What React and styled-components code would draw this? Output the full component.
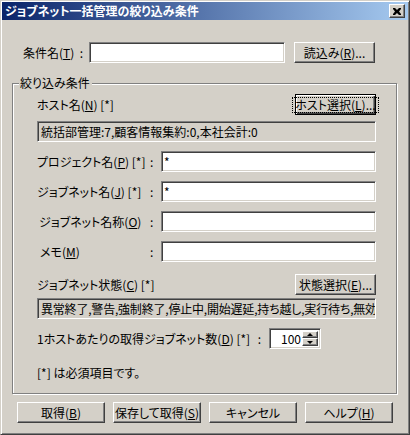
import React from "react";
import styled, { createGlobalStyle, css } from "styled-components";

const GlobalStyle = createGlobalStyle`
  html, body {
    margin: 0;
    padding: 0;
    background: #d4d0c8;
  }
  body {
    font-family: "Noto Sans CJK JP", "Liberation Sans", sans-serif;
    font-size: 12px;
    line-height: 14px;
    color: #000;
    font-feature-settings: "palt";
  }
`;

// classic win 3d edges
const raised = css`
  box-sizing: border-box;
  background: #d4d0c8;
  border: 1px solid;
  border-color: #fff #404040 #404040 #fff;
  box-shadow: inset -1px -1px #808080;
`;

const sunken = css`
  box-sizing: border-box;
  border: 1px solid;
  border-color: #808080 #fff #fff #808080;
  box-shadow: inset 1px 1px #404040, inset -1px -1px #d4d0c8;
`;

const Window = styled.div`
  box-sizing: border-box;
  width: 410px;
  height: 435px;
  background: #d4d0c8;
  border: 1px solid;
  border-color: #d4d0c8 #404040 #404040 #d4d0c8;
  box-shadow: inset 1px 1px #fff, inset -1px -1px #808080;
  padding: 1px;
  display: flex;
  flex-direction: column;
`;

const TitleBar = styled.div`
  height: 18px;
  flex: none;
  display: flex;
  align-items: center;
  justify-content: space-between;
  padding-left: 3px;
  background: linear-gradient(to right, #0a246a, #a6caf0);
  color: #fff;
  font-weight: bold;
  white-space: nowrap;
`;

const CloseBtn = styled.div`
  ${raised};
  width: 16px;
  height: 14px;
  margin-right: 3px;
  display: flex;
  align-items: center;
  justify-content: center;
`;

const Body = styled.div`
  padding: 22px 11px 0 10px;
  display: flex;
  flex-direction: column;
`;

const TopRow = styled.div`
  display: grid;
  grid-template-columns: 66px 196px 81px;
  margin-left: 11px;
  align-items: center;
  & > button {
    margin-left: 9px;
  }
`;

const LabelCell = styled.div`
  display: flex;
  justify-content: space-between;
  padding-right: ${(p) => p.$pr || 0}px;
  padding-left: ${(p) => p.$indent || 0}px;
  white-space: nowrap;
`;

const Edit = styled.div`
  ${sunken};
  height: 21px;
  background: ${(p) => (p.$readonly ? "#d4d0c8" : "#fff")};
  padding: 3px 2px 0 ${(p) => (p.$readonly ? 3 : 2)}px;
  margin-top: ${(p) => p.$mt || 0}px;
  letter-spacing: ${(p) => p.$tight ? "-0.2px" : "normal"};
  white-space: nowrap;
  overflow: hidden;
`;

const Button = styled.button`
  ${raised};
  font: inherit;
  font-feature-settings: "palt";
  color: #000;
  height: 21px;
  width: ${(p) => p.$w || 81}px;
  padding: 0;
  display: flex;
  align-items: center;
  justify-content: center;
  white-space: nowrap;
  ${(p) =>
    p.$default &&
    css`
      border: 1px solid #000;
      box-shadow: inset 1px 1px #fff, inset -1px -1px #404040,
        inset -2px -2px #808080;
    `}
`;

const FocusRing = styled.span`
  border: 1px dotted #000;
  padding: 1px 2px;
  line-height: 12px;
`;

const Group = styled.div`
  position: relative;
  box-sizing: border-box;
  height: 311px;
  margin-top: 20px;
  border: 1px solid #808080;
  box-shadow: inset 1px 1px #fff, 1px 1px #fff;
  padding: 10px 20px 0 24px;
  display: flex;
  flex-direction: column;
`;

const Legend = styled.div`
  position: absolute;
  top: -8px;
  left: 6px;
  padding: 0 2px 0 1px;
  background: #d4d0c8;
`;

const HeadRow = styled.div`
  height: 21px;
  display: flex;
  align-items: center;
  justify-content: space-between;
  margin-top: ${(p) => p.$mt || 0}px;
`;

const FieldRow = styled.div`
  display: grid;
  grid-template-columns: 112px 12px 1fr;
  align-items: center;
  margin-top: ${(p) => p.$mt || 9}px;
`;

const Colon = styled.span`
  padding-left: 1px;
`;

const CountRow = styled.div`
  display: grid;
  grid-template-columns: 232px 52px;
  align-items: center;
  margin-top: 9px;
`;

const SpinEdit = styled.div`
  ${sunken};
  height: 21px;
  background: #fff;
  padding: 2px;
  display: flex;
  justify-content: flex-end;
`;

const SpinValue = styled.span`
  padding: 1px 1px 0 0;
`;

const SpinButtons = styled.div`
  display: flex;
  flex-direction: column;
  width: 16px;
`;

const SpinBtn = styled.div`
  ${raised};
  height: ${(p) => p.$h}px;
  display: flex;
  align-items: center;
  justify-content: center;
`;

const Arrow = styled.span`
  width: 0;
  height: 0;
  border-left: 3px solid transparent;
  border-right: 3px solid transparent;
  ${(p) =>
    p.$up
      ? css`
          border-bottom: 3px solid #000;
        `
      : css`
          border-top: 3px solid #000;
        `}
`;

const Note = styled.div`
  margin-top: 17px;
`;

const ButtonBar = styled.div`
  display: grid;
  grid-template-columns: repeat(4, 88px);
  column-gap: 8px;
  margin: 8px 0 0 5px;
`;

const fields = [
  { label: <>プロジェクト名(<u>P</u>) [*]</>, value: "*" },
  { label: <>ジョブネット名(<u>J</u>) [*]</>, value: "*" },
  { label: <>ジョブネット名称(<u>O</u>)</>, value: "", indent: 2 },
  { label: <>メモ(<u>M</u>)</>, value: "", indent: 3 },
];

export default function App() {
  return (
    <>
      <GlobalStyle />
      <Window>
        <TitleBar>
          <span>ジョブネット一括管理の絞り込み条件</span>
          <CloseBtn>
            <svg width="8" height="7" viewBox="0 0 8 7">
              <path
                d="M0 0h2l2 2 2-2h2v1L6 3.5 8 6v1H6L4 5 2 7H0V6l2-2.5L0 1z"
                fill="#000"
              />
            </svg>
          </CloseBtn>
        </TitleBar>

        <Body>
          <TopRow>
            <LabelCell $pr={6}>
              <span>
                条件名(<u>T</u>)
              </span>
              <span>:</span>
            </LabelCell>
            <Edit />
            <Button>
              読込み(<u>R</u>)...
            </Button>
          </TopRow>

          <Group>
            <Legend>絞り込み条件</Legend>

            <HeadRow>
              <span>
                ホスト名(<u>N</u>) [*]
              </span>
              <Button $default>
                <FocusRing>
                  ホスト選択(<u>L</u>)...
                </FocusRing>
              </Button>
            </HeadRow>
            <Edit $readonly $mt={6}>
              統括部管理:7,顧客情報集約:0,本社会計:0
            </Edit>

            {fields.map((f, i) => (
              <FieldRow key={i}>
                <LabelCell $indent={f.indent}>
                  <span>{f.label}</span>
                </LabelCell>
                <Colon>:</Colon>
                <Edit>{f.value}</Edit>
              </FieldRow>
            ))}

            <HeadRow $mt={12}>
              <span>
                ジョブネット状態(<u>C</u>) [*]
              </span>
              <Button>
                状態選択(<u>E</u>)...
              </Button>
            </HeadRow>
            <Edit $readonly $tight $mt={3}>
              異常終了,警告,強制終了,停止中,開始遅延,持ち越し,実行待ち,無効
            </Edit>

            <CountRow>
              <LabelCell $pr={8}>
                <span>
                  1ホストあたりの取得ジョブネット数(<u>D</u>) [*]
                </span>
                <span>:</span>
              </LabelCell>
              <SpinEdit>
                <SpinValue>100</SpinValue>
                <SpinButtons>
                  <SpinBtn $h={8}>
                    <Arrow $up />
                  </SpinBtn>
                  <SpinBtn $h={9}>
                    <Arrow />
                  </SpinBtn>
                </SpinButtons>
              </SpinEdit>
            </CountRow>

            <Note>[*] は必須項目です。</Note>
          </Group>

          <ButtonBar>
            <Button $w={88}>
              取得(<u>B</u>)
            </Button>
            <Button $w={88}>
              保存して取得(<u>S</u>)
            </Button>
            <Button $w={88}>キャンセル</Button>
            <Button $w={88}>
              ヘルプ(<u>H</u>)
            </Button>
          </ButtonBar>
        </Body>
      </Window>
    </>
  );
}
